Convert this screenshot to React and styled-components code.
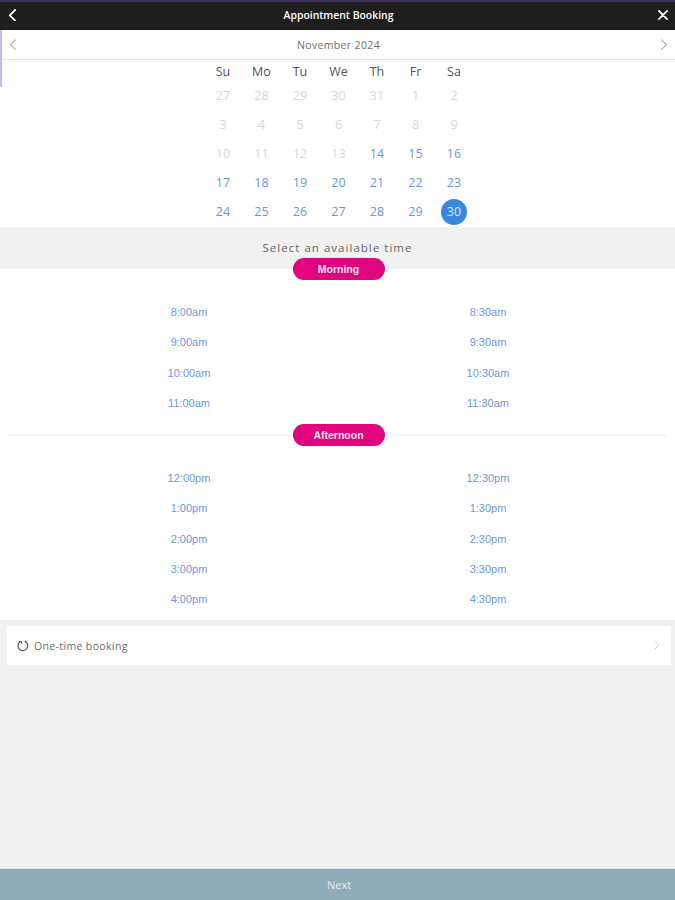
import React from "react";
import styled, { createGlobalStyle } from "styled-components";

const GlobalStyle = createGlobalStyle`
  html, body { margin: 0; padding: 0; background: #f1f1f1; }
  body { font-family: "Open Sans", "Liberation Sans", sans-serif; }
`;

const Page = styled.div`
  position: relative;
  width: 675px;
  height: 900px;
  display: flex;
  flex-direction: column;
  overflow: hidden;
  background: #f1f1f1;
`;

const Header = styled.header`
  height: 30px;
  box-sizing: border-box;
  flex: none;
  display: flex;
  align-items: center;
  justify-content: space-between;
  padding: 0 7px 2px 5px;
  background: #1e1e1e;
  border-top: 2px solid #3f2a5c;
  color: #fff;
`;

const HeaderTitle = styled.div`
  font-size: 10.4px;
  font-weight: 600;
  line-height: 14px;
`;

const IconButton = styled.span`
  display: flex;
  width: ${(p) => p.$width}px;
  height: 14px;
  align-items: center;
  justify-content: center;
`;

const SideMark = styled.div`
  position: absolute;
  left: 0;
  top: 30px;
  width: 2px;
  height: 57px;
  background: #c9b8ea;
`;

const MonthBar = styled.div`
  height: 30px;
  box-sizing: border-box;
  flex: none;
  display: flex;
  align-items: center;
  justify-content: space-between;
  padding: 0 7px;
  background: #fff;
  border-bottom: 1px solid #e6e6e6;
  margin-left: 2px;
`;

const MonthLabel = styled.div`
  font-size: 10.5px;
  color: #6f6f6f;
  letter-spacing: 0.36px;
`;

const Calendar = styled.div`
  height: 167px;
  box-sizing: border-box;
  flex: none;
  background: #fff;
  display: grid;
  grid-template-columns: repeat(7, 38.5px);
  grid-template-rows: 21px repeat(5, 29.1px);
  justify-content: center;
  padding: 0 0 3px 2px;
  align-items: center;
  justify-items: center;
`;

const WeekDay = styled.div`
  font-size: 12.5px;
  color: #555;
  position: relative;
  top: 0.5px;
`;

const Day = styled.div`
  width: 26px;
  height: 26px;
  border-radius: 50%;
  display: flex;
  align-items: center;
  justify-content: center;
  font-size: 12.5px;
  color: ${(p) => (p.$selected ? "#dce9fb" : p.$off ? "#d8d8d8" : "#6a97dc")};
  background: ${(p) => (p.$selected ? "#3a87e0" : "transparent")};
`;

const SelectBand = styled.div`
  height: 42px;
  flex: none;
  box-sizing: border-box;
  padding-top: 12px;
  text-align: center;
  background: #f1f1f1;
  font-size: 11.5px;
  line-height: 18px;
  letter-spacing: 1.03px;
  color: #666;
`;

const Slots = styled.div`
  flex: none;
  height: 351px;
  box-sizing: border-box;
  background: #fff;
`;

const Period = styled.section`
  margin: ${(p) => (p.$divided ? "0 8px" : "0")};
  border-top: ${(p) => (p.$divided ? "1px solid #f3f3f3" : "none")};
  display: flex;
  flex-direction: column;
  align-items: center;
`;

const Pill = styled.div`
  width: 92px;
  height: 22px;
  margin-top: ${(p) => (p.$divided ? "-12px" : "-11px")};
  border-radius: 11px;
  background: #e0047f;
  color: #fbe3f0;
  font-family: "Liberation Sans", Arial, sans-serif;
  font-size: 10.5px;
  font-weight: 700;
  line-height: 22px;
  text-align: center;
  position: relative;
  left: 1px;
`;

const TimeGrid = styled.div`
  width: 675px;
  box-sizing: border-box;
  display: grid;
  grid-template-columns: 299px 299px;
  grid-auto-rows: 30.3px;
  justify-content: center;
  padding: 17px 0 17px 2px;
`;

const Time = styled.div`
  font-family: "Liberation Sans", Arial, sans-serif;
  font-size: 11px;
  line-height: 30px;
  text-align: center;
  color: #7097dc;
`;

const Body = styled.div`
  flex: 1;
  padding: 6px 4px 0 7px;
`;

const BookingCard = styled.div`
  height: 39px;
  display: flex;
  align-items: center;
  padding: 0 11px 0 10px;
  background: #fff;
`;

const BookingLabel = styled.div`
  margin-left: 5px;
  flex: 1;
  font-size: 10.5px;
  letter-spacing: 0.36px;
  color: #6e6e6e;
`;

const NextBar = styled.div`
  height: 32px;
  flex: none;
  box-sizing: border-box;
  border-top: 1px solid #dbe5ea;
  padding-left: 3px;
  background: #8eabb8;
  color: #e4edf2;
  font-size: 11px;
  line-height: 31px;
  text-align: center;
`;

const Chevron = ({ dir = "left", size = 10, color = "#fff", width = 2 }) => (
  <svg width={size} height={size * 1.4} viewBox="0 0 10 14" fill="none">
    <path
      d={dir === "left" ? "M8 1 2 7l6 6" : "M2 1l6 6-6 6"}
      stroke={color}
      strokeWidth={width}
      strokeLinecap="round"
      strokeLinejoin="round"
    />
  </svg>
);

const Close = () => (
  <svg width="10" height="10" viewBox="0 0 11 11" fill="none">
    <path d="M1 1l9 9M10 1l-9 9" stroke="#fff" strokeWidth="2" strokeLinecap="round" />
  </svg>
);

const Repeat = () => (
  <svg width="12" height="12" viewBox="0 0 12 12" fill="none">
    <path
      d="M3.4 1.6A4.9 4.9 0 1 0 8 1.4"
      stroke="#555"
      strokeWidth="1.2"
      strokeLinecap="round"
    />
    <path d="M1.9 1.4h2.6v2.2" stroke="#555" strokeWidth="1" fill="none" />
  </svg>
);

const weekDays = ["Su", "Mo", "Tu", "We", "Th", "Fr", "Sa"];
const days = [27, 28, 29, 30, 31, 1, 2, 3, 4, 5, 6, 7, 8, 9, 10, 11, 12, 13, 14, 15, 16, 17, 18, 19, 20, 21, 22, 23, 24, 25, 26, 27, 28, 29, 30];

const morning = ["8:00am", "8:30am", "9:00am", "9:30am", "10:00am", "10:30am", "11:00am", "11:30am"];
const afternoon = ["12:00pm", "12:30pm", "1:00pm", "1:30pm", "2:00pm", "2:30pm", "3:00pm", "3:30pm", "4:00pm", "4:30pm"];

export default function App() {
  return (
    <Page>
      <GlobalStyle />
      <Header>
        <IconButton $width={14}>
          <Chevron size={9} />
        </IconButton>
        <HeaderTitle>Appointment Booking</HeaderTitle>
        <IconButton $width={10}>
          <Close />
        </IconButton>
      </Header>
      <SideMark />
      <MonthBar>
        <Chevron size={8} color="#aaa" width={1.3} />
        <MonthLabel>November 2024</MonthLabel>
        <Chevron dir="right" size={8} color="#aaa" width={1.3} />
      </MonthBar>
      <Calendar>
        {weekDays.map((d) => (
          <WeekDay key={d}>{d}</WeekDay>
        ))}
        {days.map((d, i) => (
          <Day key={i} $off={i < 18} $selected={i === 34}>
            {d}
          </Day>
        ))}
      </Calendar>
      <SelectBand>Select an available time</SelectBand>
      <Slots>
        <Period>
          <Pill>Morning</Pill>
          <TimeGrid>
            {morning.map((t) => (
              <Time key={t}>{t}</Time>
            ))}
          </TimeGrid>
        </Period>
        <Period $divided>
          <Pill $divided>Afternoon</Pill>
          <TimeGrid $divided>
            {afternoon.map((t) => (
              <Time key={t}>{t}</Time>
            ))}
          </TimeGrid>
        </Period>
      </Slots>
      <Body>
        <BookingCard>
          <Repeat />
          <BookingLabel>One-time booking</BookingLabel>
          <Chevron dir="right" size={6} color="#c4c4c4" width={1.6} />
        </BookingCard>
      </Body>
      <NextBar>Next</NextBar>
    </Page>
  );
}
